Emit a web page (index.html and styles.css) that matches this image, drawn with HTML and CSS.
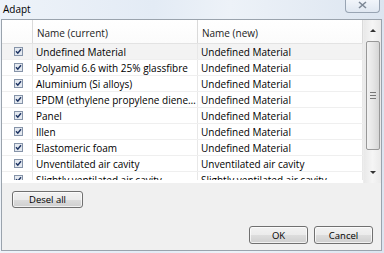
FILE: index.html
```html
<!DOCTYPE html>
<html lang="en">
<head>
    <meta charset="UTF-8">
    <title>Adapt</title>
    <link rel="stylesheet" href="styles.css">
</head>
<body>
    <div class="window">
        <div class="titlebar">
            <span class="title">Adapt</span>
            <div class="close-btn">
                <svg width="9" height="8" viewBox="0 0 9 8"><path d="M1 1 L8 7 M8 1 L1 7" stroke="#7d8896" stroke-width="1.6" fill="none"/></svg>
            </div>
        </div>

        <div class="client">
            <div class="list">
                <div class="grid">
                    <div class="row header">
                        <div class="cell check"></div>
                        <div class="cell name">Name (current)</div>
                        <div class="cell name">Name (new)</div>
                    </div>
                    <div id="rows"></div>
                </div>
                <div class="scrollbar">
                    <div class="arrow up"></div>
                    <div class="thumb"><span class="grip"></span></div>
                    <div class="track"></div>
                    <div class="arrow down"></div>
                </div>
            </div>

            <div class="actions">
                <button class="btn btn-desel">Desel all</button>
            </div>

            <div class="footer">
                <button class="btn btn-dialog">OK</button>
                <button class="btn btn-dialog">Cancel</button>
            </div>
        </div>
    </div>

    <script>
        // Linhas da lista de materiais
        const materials = [
            ['Undefined Material', 'Undefined Material'],
            ['Polyamid 6.6 with 25% glassfibre', 'Undefined Material'],
            ['Aluminium (Si alloys)', 'Undefined Material'],
            ['EPDM (ethylene propylene diene monomer)', 'Undefined Material'],
            ['Panel', 'Undefined Material'],
            ['Illen', 'Undefined Material'],
            ['Elastomeric foam', 'Undefined Material'],
            ['Unventilated air cavity', 'Unventilated air cavity'],
            ['Slightly ventilated air cavity', 'Slightly ventilated air cavity']
        ];

        const checkbox = '<svg width="9" height="9" viewBox="0 0 9 9">' +
            '<rect x="0.5" y="0.5" width="8" height="8" fill="#e4e9f0" stroke="#8593a8"/>' +
            '<path d="M2 4.2 L3.8 6.2 L7 2.2" stroke="#1f3563" stroke-width="1.5" fill="none"/></svg>';

        const rows = document.getElementById('rows');
        materials.forEach((m, i) => {
            const row = document.createElement('div');
            row.className = 'row item' + (i === 0 ? ' selected' : '');
            row.innerHTML =
                '<div class="cell check">' + checkbox + '</div>' +
                '<div class="cell name">' + m[0] + '</div>' +
                '<div class="cell name">' + m[1] + '</div>';
            rows.appendChild(row);
        });
    </script>
</body>
</html>
```

FILE: styles.css
```css
* {
    margin: 0;
    padding: 0;
    box-sizing: border-box;
    font-family: 'Open Sans', sans-serif;
}

body {
    width: 384px;
    height: 253px;
    overflow: hidden;
    background: linear-gradient(90deg, #eef3f9 0%, #e3ebf5 40%, #edf2f8 60%, #dce5f0 100%);
    color: #000;
}

.window {
    display: flex;
    flex-direction: column;
    height: 253px;
}

.titlebar {
    height: 19px;
    display: flex;
    align-items: flex-start;
    padding-left: 3px;
}

.title {
    font-size: 10px;
    line-height: 16px;
    margin-top: 1px;
}

.close-btn {
    margin-left: auto;
    margin-right: 4px;
    width: 35px;
    height: 13px;
    border: 1px solid #98a4b3;
    border-top: none;
    border-radius: 0 0 4px 4px;
    background: linear-gradient(#f1f5fa, #dfe7f1);
    display: flex;
    justify-content: center;
    align-items: center;
    padding-bottom: 2px;
}

.client {
    margin: 0 2px 2px 1px;
    height: 232px;
    border: 1px solid #9aa3ad;
    background-color: #f0f0f0;
    display: flex;
    flex-direction: column;
}

.list {
    display: flex;
    height: 163px;
    background-color: #fff;
}

.grid {
    width: 361px;
    height: 160px;
    overflow: hidden;
}

.row {
    display: flex;
}

.cell {
    font-size: 10px;
    white-space: nowrap;
    overflow: hidden;
    text-overflow: ellipsis;
}

.cell.check {
    width: 31px;
    border-right: 1px solid #e8e8e8;
    display: flex;
    justify-content: center;
    align-items: center;
    padding-left: 2px;
}

.cell.name {
    width: 165px;
    padding-left: 3px;
    border-right: 1px solid #e8e8e8;
}

.header {
    height: 24px;
    border-bottom: 1px solid #e3e3e3;
    background: linear-gradient(#ffffff, #fbfbfb);
}

.header .cell {
    line-height: 22px;
    padding-top: 2px;
    border-right-color: #dadada;
    color: #222;
}

.header .cell.name {
    padding-left: 4px;
}

.item {
    height: 16px;
    border-bottom: 1px solid #efefef;
}

.item .cell {
    line-height: 16px;
}

.item.selected {
    background-color: #f3f3f3;
}

.scrollbar {
    width: 18px;
    border-left: 1px solid #ededed;
    background: linear-gradient(90deg, #e9e9e9, #f5f5f5 50%, #eaeaea);
    display: flex;
    flex-direction: column;
    align-items: center;
    padding: 0 1px;
}

.arrow {
    height: 21px;
    width: 100%;
    display: flex;
    justify-content: center;
    align-items: center;
}

.arrow::after {
    content: '';
    border-left: 3px solid transparent;
    border-right: 3px solid transparent;
}

.arrow.up::after {
    border-bottom: 3px solid #333;
}

.arrow.down::after {
    border-top: 3px solid #333;
}

.thumb {
    width: 14px;
    height: 109px;
    border: 1px solid #989898;
    border-radius: 2px;
    background: linear-gradient(90deg, #f2f2f2, #e6e6e6 50%, #d6d6d6);
    display: flex;
    justify-content: center;
    align-items: center;
}

.grip {
    width: 6px;
    height: 7px;
    border-top: 1px solid #777;
    border-bottom: 1px solid #777;
    position: relative;
}

.grip::after {
    content: '';
    position: absolute;
    left: 0;
    right: 0;
    top: 2px;
    border-top: 1px solid #777;
}

.track {
    flex: 1;
}

.btn {
    font-size: 9.5px;
    font-family: 'Open Sans', sans-serif;
    color: #000;
    border: 1px solid #707070;
    border-radius: 3px;
    background: linear-gradient(#f2f2f2 0%, #ebebeb 50%, #dddddd 51%, #cfcfcf 100%);
    box-shadow: inset 0 0 0 1px rgba(255, 255, 255, 0.7);
    cursor: pointer;
}

.actions {
    padding: 3px 0 0 10px;
}

.btn-desel {
    width: 71px;
    height: 17px;
}

.footer {
    margin-top: auto;
    display: flex;
    justify-content: flex-end;
    gap: 6px;
    padding: 0 8px 6px 0;
}

.btn-dialog {
    width: 59px;
    height: 18px;
}
```
